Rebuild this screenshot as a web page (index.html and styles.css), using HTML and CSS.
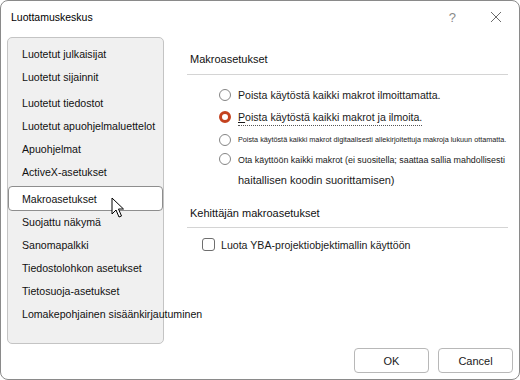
FILE: index.html
```html
<!DOCTYPE html>
<html lang="fi">

<head>
  <meta charset="UTF-8">
  <title>Luottamuskeskus</title>
  <link rel="stylesheet" href="styles.css">
</head>

<body>

  <div class="dialog">

    <!-- Title bar -->
    <div class="titlebar">
      <span class="title">Luottamuskeskus</span>
      <span class="help">?</span>
      <svg class="close" width="12" height="12" viewBox="0 0 12 12">
        <path d="M1 1 L11 11 M11 1 L1 11" stroke="#6b6b6b" stroke-width="1" fill="none" />
      </svg>
    </div>

    <div class="main">

      <!-- Left navigation -->
      <ul class="nav">
        <li>Luotetut julkaisijat</li>
        <li>Luotetut sijainnit</li>
        <li class="gap">Luotetut tiedostot</li>
        <li>Luotetut apuohjelmaluettelot</li>
        <li>Apuohjelmat</li>
        <li>ActiveX-asetukset</li>
        <li class="selected">Makroasetukset</li>
        <li>Suojattu näkymä</li>
        <li>Sanomapalkki</li>
        <li>Tiedostolohkon asetukset</li>
        <li>Tietosuoja-asetukset</li>
        <li>Lomakepohjainen sisäänkirjautuminen</li>
      </ul>

      <!-- Settings -->
      <div class="settings">
        <h2 class="section-title">Makroasetukset</h2>
        <div class="options">
          <label class="option opt1"><span class="radio"></span><span>Poista käytöstä kaikki makrot ilmoittamatta.</span></label>
          <label class="option opt2"><span class="radio checked"></span><span class="focused"><u>P</u>oista käytöstä kaikki makrot ja ilmoita.</span></label>
          <label class="option opt3"><span class="radio"></span><span class="tiny">Poista käytöstä kaikki makrot digitaalisesti allekirjoitettuja makroja lukuun ottamatta.</span></label>
          <label class="option opt4"><span class="radio"></span><span><span class="small">Ota käyttöön kaikki makrot (ei suositella; saattaa sallia mahdollisesti</span><br>haitallisen koodin suorittamisen)</span></label>
        </div>

        <h2 class="section-title dev">Kehittäjän makroasetukset</h2>
        <label class="check-row"><span class="checkbox"></span><span>Luota YBA-projektiobjektimallin käyttöön</span></label>
      </div>
    </div>

    <!-- Footer buttons -->
    <div class="footer">
      <button class="btn">OK</button>
      <button class="btn">Cancel</button>
    </div>

    <!-- Mouse pointer over the selected item -->
    <svg class="pointer" width="14" height="22" viewBox="0 0 14 22">
      <path d="M1 1 L1 17 L5 13 L8 20 L10.5 19 L7.5 12 L12.5 12 Z" fill="#fff" stroke="#000" stroke-width="1" stroke-linejoin="round" />
    </svg>
  </div>

</body>

</html>
```

FILE: styles.css
```css
/* Reset styles */
* {
  margin: 0;
  padding: 0;
  box-sizing: border-box;
}

body {
  width: 520px;
  height: 380px;
  background: #fff;
  font-family: "Liberation Sans", Arial, sans-serif;
  font-size: 10.6px;
  color: #1a1a1a;
  overflow: hidden;
}

/* Dialog frame */
.dialog {
  position: relative;
  width: 520px;
  height: 380px;
  border: 1px solid #8a8a8a;
  border-radius: 8px;
  background: #fff;
  display: flex;
  flex-direction: column;
}

.titlebar {
  height: 36px;
  display: flex;
  align-items: center;
  padding: 0 0 4px 10px;
}

.title {
  flex: 1;
  font-size: 10.5px;
  color: #000;
}

.help {
  color: #8a8a8a;
  font-size: 13px;
  margin-right: 34px;
}

.close {
  margin-right: 17px;
}

.main {
  display: flex;
  height: 307px;
}

/* Left navigation */
.nav {
  list-style: none;
  width: 157px;
  margin-left: 6px;
  padding-top: 5px;
  background: #f0f0f0;
  border: 1px solid #c4c4c4;
  border-radius: 5px;
}

.nav li {
  height: 23px;
  line-height: 23px;
  padding-left: 14px;
  white-space: nowrap;
  color: #111;
}

.nav li.gap {
  margin-top: 3px;
}

.nav li.selected {
  height: 25px;
  line-height: 25px;
  margin-top: 2px;
  background: #fff;
  border: 1px solid #8e8e8e;
  border-radius: 4px;
  padding-left: 13px;
}

/* Settings area */
.settings {
  flex: 1;
  padding: 16px 11px 0 23px;
}

.section-title {
  font-size: 11px;
  font-weight: normal;
  line-height: 13px;
  color: #111;
  padding: 0 0 8px 3px;
  border-bottom: 1px solid #d4d4d4;
}

.section-title.dev {
  margin-top: 17px;
  padding-bottom: 7px;
}

.options {
  padding: 10px 0 0 32px;
}

.option {
  display: flex;
  align-items: flex-start;
  white-space: nowrap;
  line-height: 20px;
}

.opt1 {
  height: 22px;
}

.opt2 {
  height: 23px;
}

.opt3 {
  height: 19px;
}

.opt4 {
  font-size: 11px;
}

.radio {
  flex: none;
  width: 12px;
  height: 12px;
  margin: 4px 7px 0 0;
  border: 1px solid #858585;
  border-radius: 50%;
  background: #fff;
}

.radio.checked {
  border: 3.5px solid #c4421f;
}

.focused {
  border-bottom: 1px dotted #555;
  line-height: 16px;
  margin-top: 2px;
  height: 17px;
}

.tiny {
  font-size: 7.25px;
}

.small {
  font-size: 8.9px;
}

.check-row {
  display: flex;
  align-items: center;
  padding: 10px 0 0 15px;
}

.checkbox {
  width: 13px;
  height: 13px;
  margin-right: 6px;
  border: 1px solid #6e6e6e;
  border-radius: 3px;
  background: #fff;
}

/* Footer buttons */
.footer {
  display: flex;
  justify-content: flex-end;
  gap: 9px;
  padding: 4px 6px 0 0;
}

.btn {
  width: 75px;
  height: 25px;
  font-family: "Liberation Sans", Arial, sans-serif;
  font-size: 11px;
  color: #1a1a1a;
  background: #fff;
  border: 1px solid #b8b8b8;
  border-radius: 4px;
}

.pointer {
  position: absolute;
  left: 110px;
  top: 196px;
}
```
